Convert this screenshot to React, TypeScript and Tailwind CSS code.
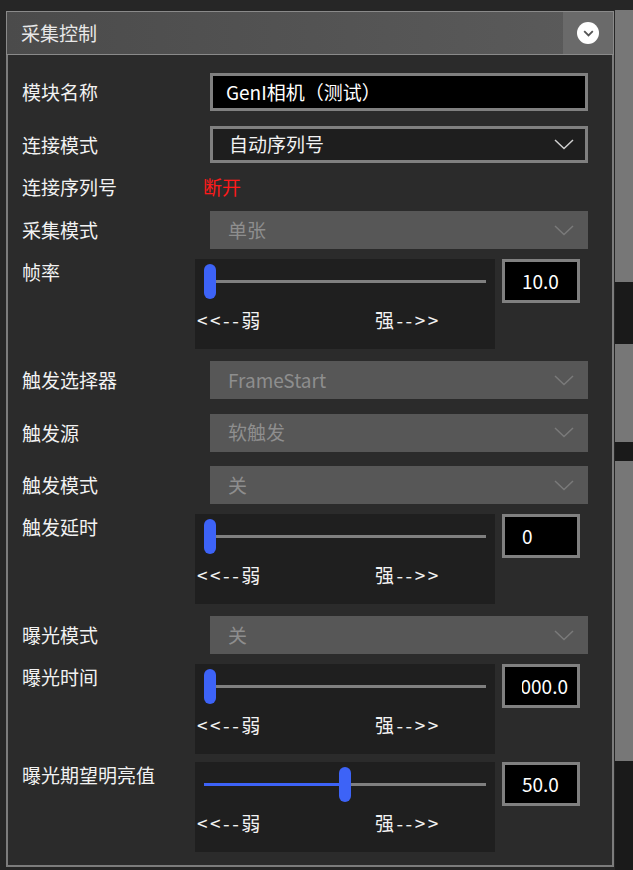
const FONT = "font-['Microsoft_YaHei','Noto_Sans_CJK_SC',sans-serif]";

function Chevron({ color }: { color: string }) {
  return (
    <svg width="20" height="11" viewBox="0 0 20 11">
      <path d="M1 1 L10 9.5 L19 1" fill="none" stroke={color} strokeWidth="1.5" />
    </svg>
  );
}

function Row({ label, mt, h, top, children }: { label: string; mt: string; h: string; top?: boolean; children: React.ReactNode }) {
  return (
    <div className={`flex ${mt} ${h} ${top ? "items-start" : "items-center"}`}>
      <div className="w-[173px] shrink-0 text-[19px] leading-[26px] text-[#f2f2f2]">{label}</div>
      {children}
    </div>
  );
}

function Select({ value, disabled }: { value: string; disabled?: boolean }) {
  if (disabled) {
    return (
      <div className="ml-[15px] flex h-[38px] w-[378px] items-center justify-between bg-[#575757] pl-[18px] pr-[14px] text-[19px] text-[#8e8e8e]">
        <span>{value}</span>
        <Chevron color="#7a7a7a" />
      </div>
    );
  }
  return (
    <div className="ml-[15px] flex h-[37px] w-[378px] items-center justify-between border-[3px] border-[#808080] bg-[#1e1e1e] pl-[16px] pr-[11px] text-[19px] text-[#f2f2f2]">
      <span>{value}</span>
      <Chevron color="#d0d0d0" />
    </div>
  );
}

function Slider({ pct, value, clip }: { pct: number; value: string; clip?: boolean }) {
  const trackW = 282;
  const thumbW = 12;
  const left = pct * (trackW - thumbW);
  return (
    <div className="flex gap-[7px]">
      <div className="h-[90px] w-[300px] bg-[#1f1f1f] pt-[5px]">
        <div className="relative mx-[9px] h-[35px]">
          <div className="absolute left-0 right-0 top-[16px] h-[3px] bg-[#808080]" />
          <div className="absolute left-0 top-[16px] h-[3px] bg-[#3d63f7]" style={{ width: left }} />
          <div className="absolute top-0 h-[35px] w-[12px] rounded-full bg-[#3d63f7]" style={{ left }} />
        </div>
        <div className="mt-[8px] flex pl-[2px] text-[19px] leading-[26px] text-[#f2f2f2]">
          <span className="w-[178px] tracking-[2.5px]">&lt;&lt;--弱</span>
          <span className="tracking-[2.5px]">强--&gt;&gt;</span>
        </div>
      </div>
      <div className="flex h-[44px] w-[78px] items-center border-[3px] border-[#808080] bg-black pl-[17px] pr-[9px] text-[19px] text-white">
        {clip ? (
          <div className="flex w-full justify-end overflow-hidden whitespace-nowrap">
            <span>10000.0</span>
          </div>
        ) : (
          <span>{value}</span>
        )}
      </div>
    </div>
  );
}

export default function App() {
  return (
    <div className={`flex h-[870px] w-[633px] overflow-hidden bg-[#262626] ${FONT}`}>
      <div className="ml-[6px] mt-[11px] w-[608px]">
        {/* Header */}
        <div className="flex h-[44px] border border-[#8a8a8a] bg-gradient-to-r from-[#4b4b4b] to-[#5b5b5b]">
          <div className="flex flex-1 items-center pl-[14px] text-[19px] text-[#e8e8e8]">采集控制</div>
          <div className="flex w-[50px] items-center justify-center bg-[#6a6a6a]">
            <div className="flex h-[22px] w-[22px] items-center justify-center rounded-full bg-white">
              <svg width="11" height="7" viewBox="0 0 11 7">
                <path d="M1.2 1.2 L5.5 5.5 L9.8 1.2" fill="none" stroke="#555" strokeWidth="1.8" />
              </svg>
            </div>
          </div>
        </div>

        {/* Body */}
        <div className="border-x-2 border-b-2 border-[#7c7c7c] bg-[#2b2b2b] pb-[13px] pl-[14px] pt-[18px]">
          <Row label="模块名称" mt="mt-0" h="h-[38px]">
            <div className="ml-[15px] flex h-[38px] w-[378px] items-center border-[3px] border-[#808080] bg-black pl-[13px] text-[19px] text-white">
              GenI相机（测试）
            </div>
          </Row>
          <Row label="连接模式" mt="mt-[15px]" h="h-[37px]">
            <Select value="自动序列号" />
          </Row>
          <Row label="连接序列号" mt="mt-[12px]" h="h-[24px]">
            <span className="ml-[8px] text-[19px] text-[#ff1a1a]">断开</span>
          </Row>
          <Row label="采集模式" mt="mt-[12px]" h="h-[38px]">
            <Select value="单张" disabled />
          </Row>
          <Row label="帧率" mt="mt-[10px]" h="h-[90px]" top>
            <Slider pct={0} value="10.0" />
          </Row>
          <Row label="触发选择器" mt="mt-[12px]" h="h-[38px]">
            <Select value="FrameStart" disabled />
          </Row>
          <Row label="触发源" mt="mt-[15px]" h="h-[37px]">
            <Select value="软触发" disabled />
          </Row>
          <Row label="触发模式" mt="mt-[15px]" h="h-[38px]">
            <Select value="关" disabled />
          </Row>
          <Row label="触发延时" mt="mt-[10px]" h="h-[90px]" top>
            <Slider pct={0} value="0" />
          </Row>
          <Row label="曝光模式" mt="mt-[12px]" h="h-[38px]">
            <Select value="关" disabled />
          </Row>
          <Row label="曝光时间" mt="mt-[10px]" h="h-[90px]" top>
            <Slider pct={0} value="" clip />
          </Row>
          <Row label="曝光期望明亮值" mt="mt-[8px]" h="h-[90px]" top>
            <Slider pct={0.5} value="50.0" />
          </Row>
        </div>
      </div>

      {/* Right strip */}
      <div className="ml-[1px] mt-[10px] flex w-[18px] flex-col">
        <div className="h-[272px] bg-[#777777]" />
        <div className="h-[62px] bg-[#1a1a1a]" />
        <div className="h-[98px] bg-[#777777]" />
        <div className="h-[19px] bg-[#1a1a1a]" />
        <div className="h-[300px] bg-[#777777]" />
        <div className="flex-1 bg-[#1a1a1a]" />
      </div>
    </div>
  );
}
